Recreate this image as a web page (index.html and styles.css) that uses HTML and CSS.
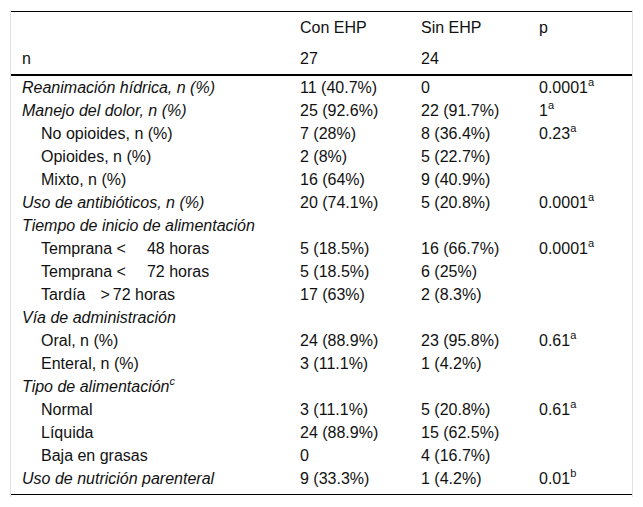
FILE: index.html
```html
<!DOCTYPE html>
<html lang="es">
<head>
<meta charset="utf-8">
<link rel="stylesheet" href="styles.css">
</head>
<body>
<div class="frame">
<table class="tbl">
<colgroup>
<col class="c1"><col class="c2"><col class="c3"><col class="c4">
</colgroup>
<thead>
<tr class="hrow"><th></th><th>Con EHP</th><th>Sin EHP</th><th>p</th></tr>
<tr class="hrow last"><th>n</th><th>27</th><th>24</th><th></th></tr>
</thead>
<tbody>
<tr><td class="it">Reanimación hídrica, n (%)</td><td>11 (40.7%)</td><td>0</td><td>0.0001<sup>a</sup></td></tr>
<tr><td class="it">Manejo del dolor, n (%)</td><td>25 (92.6%)</td><td>22 (91.7%)</td><td>1<sup>a</sup></td></tr>
<tr><td class="ind">No opioides, n (%)</td><td>7 (28%)</td><td>8 (36.4%)</td><td>0.23<sup>a</sup></td></tr>
<tr><td class="ind">Opioides, n (%)</td><td>2 (8%)</td><td>5 (22.7%)</td><td></td></tr>
<tr><td class="ind">Mixto, n (%)</td><td>16 (64%)</td><td>9 (40.9%)</td><td></td></tr>
<tr><td class="it">Uso de antibióticos, n (%)</td><td>20 (74.1%)</td><td>5 (20.8%)</td><td>0.0001<sup>a</sup></td></tr>
<tr><td class="it">Tiempo de inicio de alimentación</td><td></td><td></td><td></td></tr>
<tr><td class="ind">Temprana &lt;<span class="gap-lg"></span>48 horas</td><td>5 (18.5%)</td><td>16 (66.7%)</td><td>0.0001<sup>a</sup></td></tr>
<tr><td class="ind">Temprana &lt;<span class="gap-lg"></span>72 horas</td><td>5 (18.5%)</td><td>6 (25%)</td><td></td></tr>
<tr><td class="ind">Tardía<span class="gap-md"></span>&gt;<span class="gap-sm"></span>72 horas</td><td>17 (63%)</td><td>2 (8.3%)</td><td></td></tr>
<tr><td class="it">Vía de administración</td><td></td><td></td><td></td></tr>
<tr><td class="ind">Oral, n (%)</td><td>24 (88.9%)</td><td>23 (95.8%)</td><td>0.61<sup>a</sup></td></tr>
<tr><td class="ind">Enteral, n (%)</td><td>3 (11.1%)</td><td>1 (4.2%)</td><td></td></tr>
<tr><td class="it">Tipo de alimentación<sup>c</sup></td><td></td><td></td><td></td></tr>
<tr><td class="ind">Normal</td><td>3 (11.1%)</td><td>5 (20.8%)</td><td>0.61<sup>a</sup></td></tr>
<tr><td class="ind">Líquida</td><td>24 (88.9%)</td><td>15 (62.5%)</td><td></td></tr>
<tr><td class="ind">Baja en grasas</td><td>0</td><td>4 (16.7%)</td><td></td></tr>
<tr class="final"><td class="it">Uso de nutrición parenteral</td><td>9 (33.3%)</td><td>1 (4.2%)</td><td>0.01<sup>b</sup></td></tr>
</tbody>
</table>
</div>
</body>
</html>
```
FILE: styles.css
```css
html, body {
  margin: 0;
  padding: 0;
  background: #fff;
}
body {
  font-family: "Liberation Sans", Arial, sans-serif;
  font-size: 16px;
  color: #111;
}
.frame {
  margin: 10px 10px 0 10px;
  width: 621px;
  border-left: 1px solid #e2e2e2;
  border-right: 1px solid #e2e2e2;
  padding-top: 1px;
  padding-bottom: 2px;
}
.tbl {
  width: 621px;
  border-collapse: collapse;
  table-layout: fixed;
  border-top: 1px solid #000;
  border-bottom: 1px solid #000;
}
.c1 { width: 278px; }
.c2 { width: 121px; }
.c3 { width: 118px; }
.c4 { width: 104px; }
.tbl th {
  font-weight: normal;
  text-align: left;
  vertical-align: middle;
  height: 31px;
  padding: 0 0 0 11px;
  line-height: 19px;
}
.hrow.last th {
  border-bottom: 2px solid #000;
}
.tbl td {
  padding: 2px 0 2px 11px;
  line-height: 19px;
  height: 19px;
  vertical-align: top;
  white-space: nowrap;
}
.tbl tr.final td {
  padding-bottom: 6px;
}
.it {
  font-style: italic;
}
.tbl td.ind {
  padding-left: 30px;
}
sup {
  font-size: 11px;
  line-height: 0;
  vertical-align: 7px;
}
.gap-lg {
  display: inline-block;
  width: 21px;
}
.gap-md {
  display: inline-block;
  width: 15px;
}
.gap-sm {
  display: inline-block;
  width: 3px;
}
```
